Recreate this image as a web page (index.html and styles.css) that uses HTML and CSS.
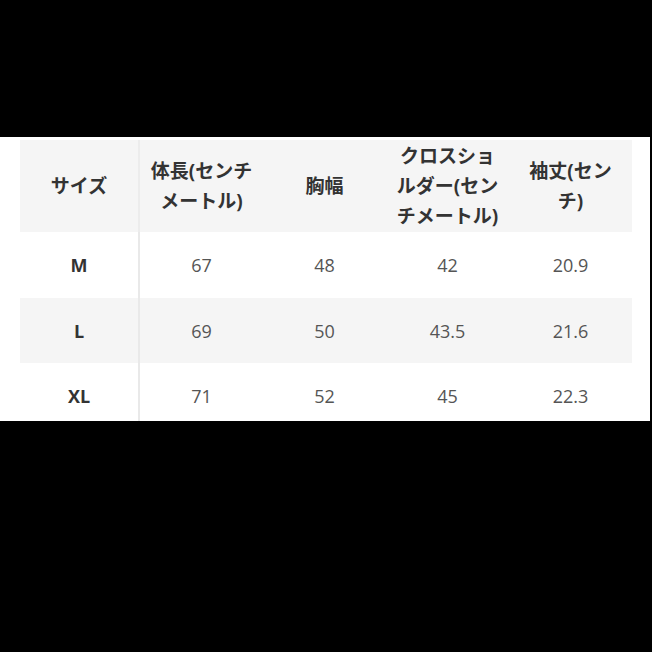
FILE: index.html
```html
<!DOCTYPE html>
<html lang="ja">
<head>
<meta charset="utf-8">
<link rel="stylesheet" href="styles.css">
</head>
<body>
<div class="panel">
  <div class="table">
    <div class="row head">
      <div class="cell first">サイズ</div>
      <div class="cell">体長(センチ<br>メートル)</div>
      <div class="cell">胸幅</div>
      <div class="cell">クロスショ<br>ルダー(セン<br>チメートル)</div>
      <div class="cell">袖丈(セン<br>チ)</div>
    </div>
    <div class="row r1">
      <div class="cell first size">M</div>
      <div class="cell">67</div>
      <div class="cell">48</div>
      <div class="cell">42</div>
      <div class="cell">20.9</div>
    </div>
    <div class="row r2 alt">
      <div class="cell first size">L</div>
      <div class="cell">69</div>
      <div class="cell">50</div>
      <div class="cell">43.5</div>
      <div class="cell">21.6</div>
    </div>
    <div class="row r3">
      <div class="cell first size">XL</div>
      <div class="cell">71</div>
      <div class="cell">52</div>
      <div class="cell">45</div>
      <div class="cell">22.3</div>
    </div>
  </div>
</div>
</body>
</html>
```

FILE: styles.css
```css
html, body {
  margin: 0;
  padding: 0;
  background: #000;
  width: 652px;
  height: 652px;
  overflow: hidden;
}
.panel {
  margin-top: 137px;
  width: 650px;
  height: 284px;
  background: #fff;
  padding: 3px 18px 0 20px;
  box-sizing: border-box;
  overflow: hidden;
}
.table {
  width: 612px;
}
.row {
  display: grid;
  grid-template-columns: 120px repeat(4, 1fr);
  font-family: "Open Sans", "Noto Sans CJK JP", sans-serif;
  font-size: 18px;
  color: #555;
}
.head {
  height: 92px;
  background: #f5f5f5;
  font-family: "Open Sans", "Noto Sans CJK JP", sans-serif;
  font-size: 19px;
  font-weight: 700;
  color: #333;
  line-height: 30px;
}
.r1 { height: 66px; }
.r2 { height: 65px; }
.r3 { height: 66px; }
.alt { background: #f5f5f5; }
.cell {
  display: flex;
  align-items: center;
  justify-content: center;
  text-align: center;
}
.first {
  border-right: 2px solid #e9e9e9;
}
.head .first {
  border-right-color: #ececec;
}
.size {
  font-weight: 700;
  color: #333;
}
```
